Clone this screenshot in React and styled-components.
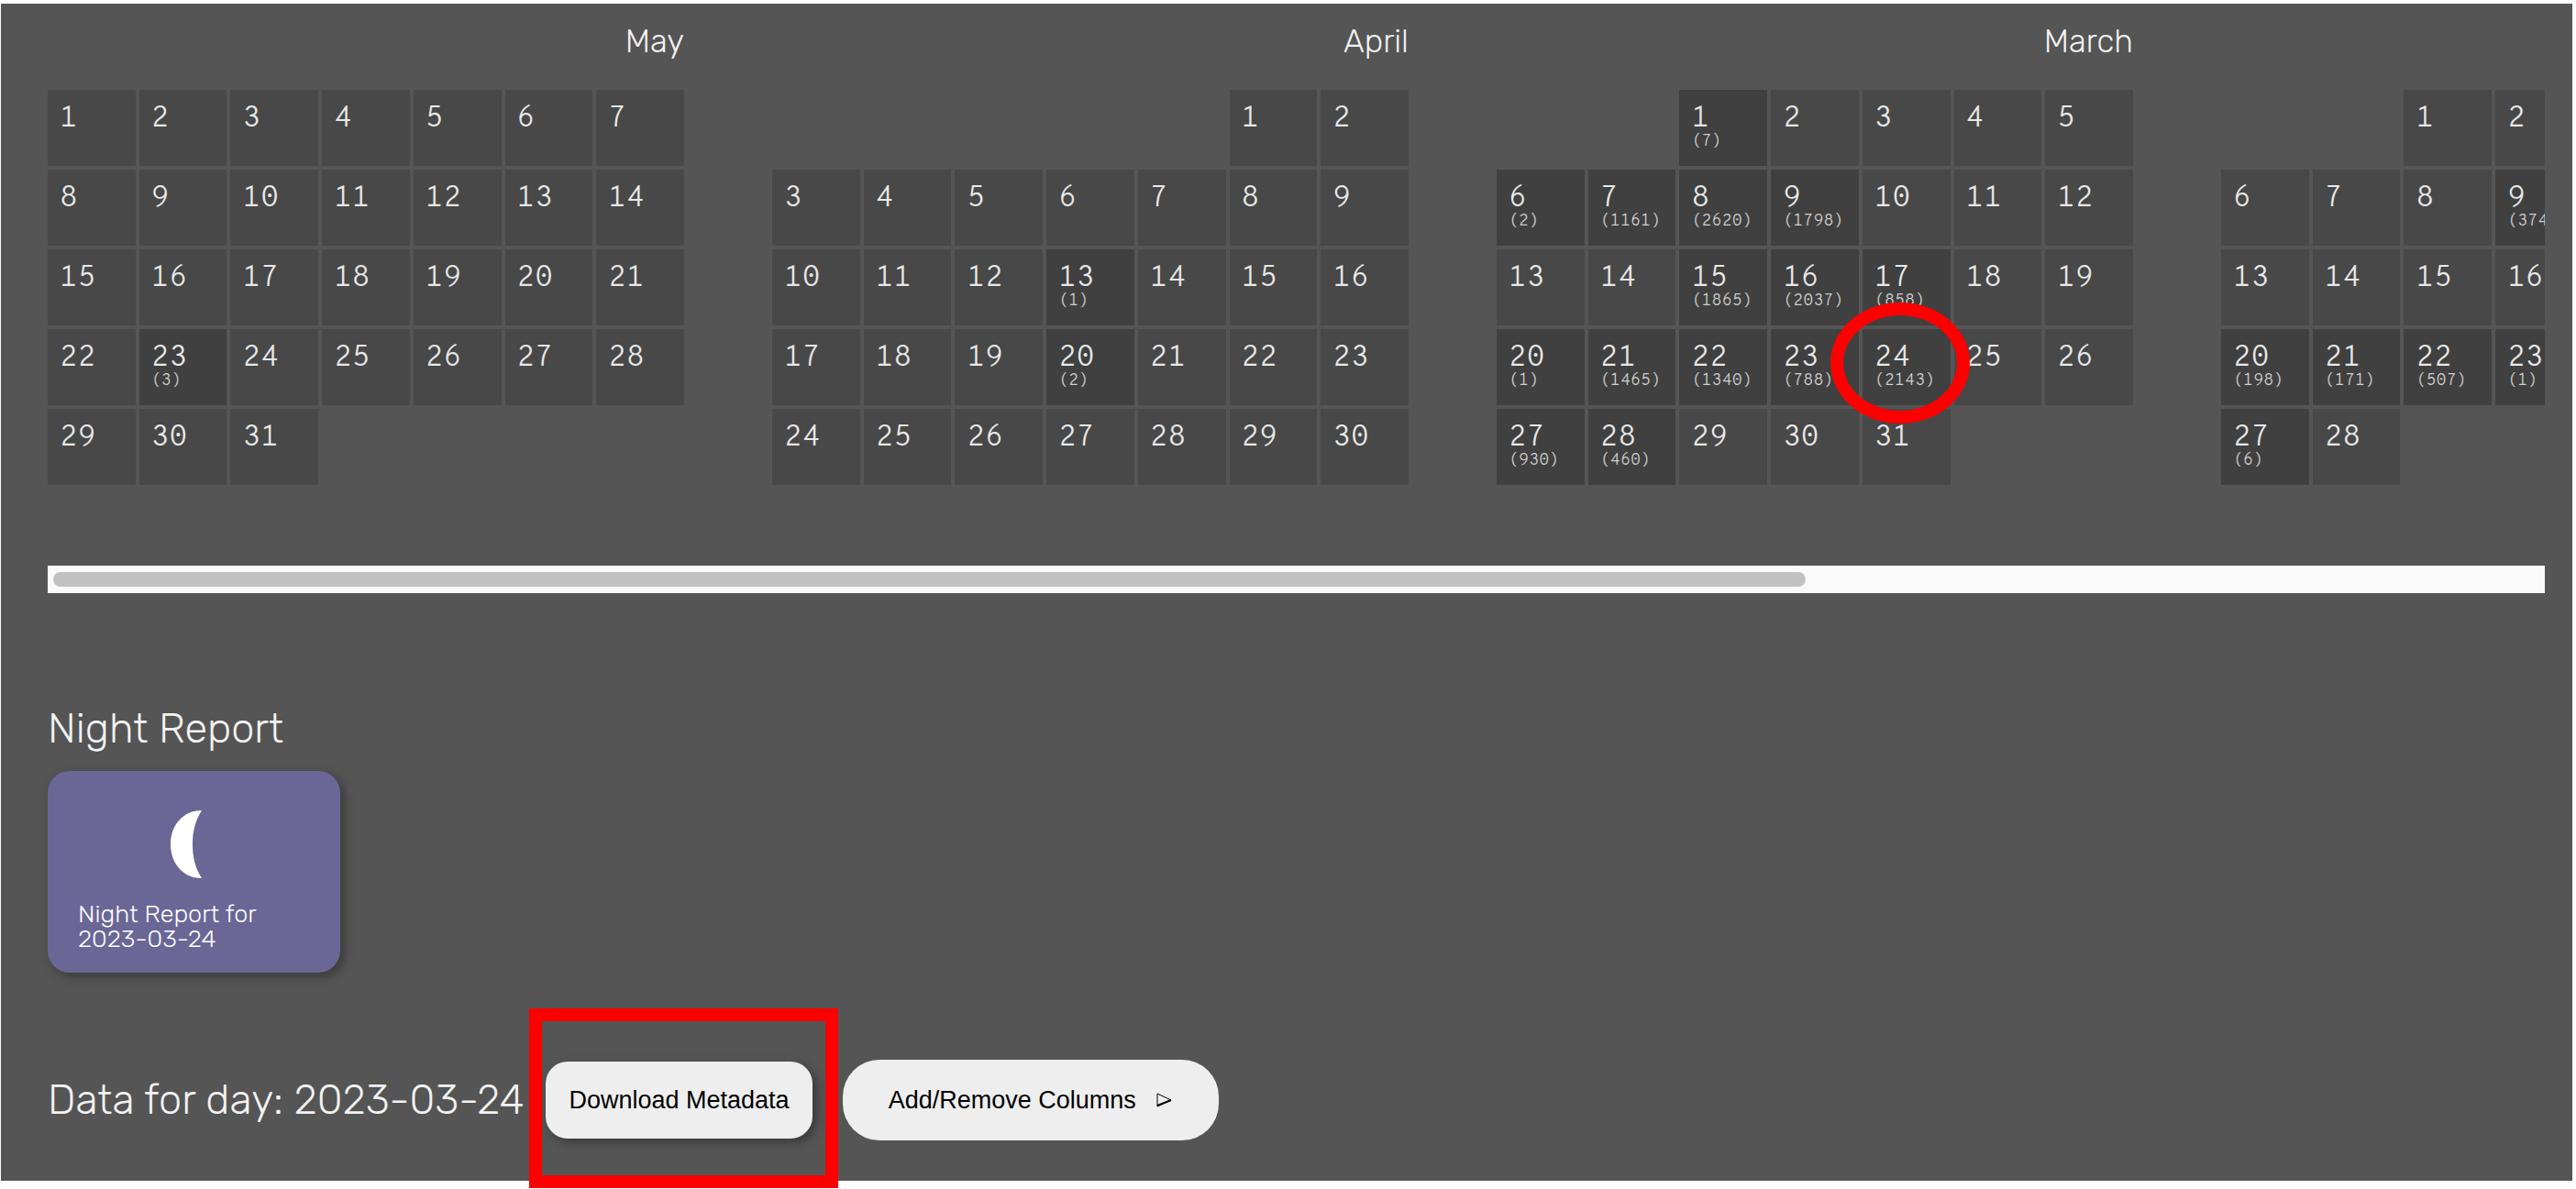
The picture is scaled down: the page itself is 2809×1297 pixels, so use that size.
import React from "react";
import styled, { createGlobalStyle, css } from "styled-components";

const sans = `Rubik, Inter, "Liberation Sans", sans-serif`;
const mono = `"Overpass Mono", "Liberation Mono", monospace`;

const GlobalStyle = createGlobalStyle`
  *, *::before, *::after { box-sizing: border-box; }
  body {
    margin: 0;
    background: #fff;
    font-family: ${sans};
    font-weight: 300;
    overflow-x: hidden;
  }
`;

const Page = styled.main`
  margin: 4px 4px 8px 1px;
  padding: 20px 30px 44px 51px;
  background: #555;
  color: #f2f2f2;
`;

const Months = styled.div`
  display: flex;
  gap: 96px;
  overflow: hidden;
`;

const MonthSection = styled.section`
  flex: none;
  width: 694px;
`;

const MonthName = styled.h3`
  margin: 0 0 34px;
  height: 40px;
  font-size: 35px;
  line-height: 42px;
  font-weight: 300;
  text-align: right;
`;

const Days = styled.div`
  display: grid;
  grid-template-columns: repeat(7, 1fr);
  grid-auto-rows: 83px;
  gap: 4px;
`;

const Day = styled.button`
  position: relative;
  display: flex;
  flex-direction: column;
  align-items: flex-start;
  min-width: 0;
  padding: 14px 0 0 13px;
  border: 0;
  background: ${(p) => (p.$hasData ? "#404040" : "#484848")};
  color: #e8e8e8;
  font-family: ${mono};
  font-weight: 300;
  font-size: 32px;
  line-height: 36px;
  text-align: left;
  ${(p) => p.$column && css`grid-column: ${p.$column};`}
`;

const Count = styled.small`
  color: #d0d0d0;
  font-size: 18px;
  line-height: 14px;
`;

const RedCircle = styled.span`
  position: absolute;
  z-index: 1;
  top: -29px;
  left: -35px;
  width: 152px;
  height: 132px;
  border: 14px solid #f00;
  border-radius: 50%;
  pointer-events: none;
`;

const Track = styled.div`
  margin-top: 88px;
  height: 30px;
  padding: 7px 6px;
  background: #fafafa;
`;

const Thumb = styled.div`
  width: ${(p) => p.$share}%;
  height: 16px;
  border-radius: 8px;
  background: #c1c1c1;
`;

const Heading = styled.h2`
  margin: 0;
  font-size: 45px;
  line-height: 52px;
  font-weight: 300;
  white-space: nowrap;
`;

const Report = styled.section`
  display: flex;
  flex-direction: column;
  align-items: flex-start;
  gap: 20px;
  padding-top: 122px;
`;

const ReportCard = styled.a`
  display: flex;
  flex-direction: column;
  width: 319px;
  height: 220px;
  padding: 42px 33px 0;
  border-radius: 24px;
  background: #6a6797;
  box-shadow: 4px 4px 12px rgba(0, 0, 0, 0.35);
  color: #fff;
  font-size: 27px;
  line-height: 27px;
  text-decoration: none;
`;

const Moon = styled.svg`
  align-self: center;
  width: 76px;
  height: 76px;
  margin-bottom: 25px;
`;

const DataBar = styled.section`
  display: flex;
  align-items: center;
  gap: 24px;
  margin-top: 95px;
`;

const ButtonGroup = styled.div`
  display: flex;
  align-items: center;
  gap: 33px;
`;

const Marked = styled.div`
  position: relative;
`;

const RedBox = styled.span`
  position: absolute;
  inset: -58px -28px -54px -18px;
  border: 14px solid #f00;
  pointer-events: none;
`;

const PillButton = styled.button`
  display: flex;
  align-items: center;
  gap: 22px;
  height: ${(p) => (p.$wide ? 88 : 84)}px;
  padding: 0 ${(p) => (p.$wide ? 50 : 25)}px;
  border: 0;
  border-radius: ${(p) => (p.$wide ? 40 : 24)}px;
  background: #eee;
  color: #000;
  box-shadow: ${(p) => (p.$wide ? "none" : "4px 4px 12px rgba(0, 0, 0, 0.35)")};
  font-family: "Liberation Sans", Arial, sans-serif;
  font-size: 27px;
  white-space: nowrap;
`;

const Arrow = styled.svg`
  width: 18px;
  height: 16px;
`;

const months = [
  { name: "May", start: 1, days: 31, counts: { 23: 3 } },
  { name: "April", start: 6, days: 30, counts: { 13: 1, 20: 2 } },
  {
    name: "March",
    start: 3,
    days: 31,
    marked: 24,
    counts: {
      1: 7, 6: 2, 7: 1161, 8: 2620, 9: 1798, 15: 1865, 16: 2037, 17: 858,
      20: 1, 21: 1465, 22: 1340, 23: 788, 24: 2143, 27: 930, 28: 460,
    },
  },
  {
    start: 3,
    days: 28,
    columns: 4,
    counts: { 9: 374, 20: 198, 21: 171, 22: 507, 23: 1, 27: 6 },
  },
];

function Month({ name, start, days, counts, marked, columns = 7 }) {
  const cells = Array.from({ length: days }, (_, i) => ({
    day: i + 1,
    column: ((start - 1 + i) % 7) + 1,
  })).filter((c) => c.column <= columns);
  return (
    <MonthSection>
      <MonthName>{name}</MonthName>
      <Days>
        {cells.map(({ day, column }) => (
          <Day key={day} type="button" $column={column} $hasData={day in counts}>
            {day}
            {day in counts && <Count>({counts[day]})</Count>}
            {marked === day && <RedCircle />}
          </Day>
        ))}
      </Days>
    </MonthSection>
  );
}

export default function App() {
  return (
    <>
      <GlobalStyle />
      <Page>
        <Months>
          {months.map((m, i) => (
            <Month key={i} {...m} />
          ))}
        </Months>
        <Track>
          <Thumb $share={70.5} />
        </Track>
        <Report>
          <Heading>Night Report</Heading>
          <ReportCard href="#night-report">
            <Moon viewBox="-5 0 76 76" aria-hidden="true">
              <path d="M41 1C21 1 7 17 7 38s14 37 34 37C34 64 31 52 31 38S34 12 41 1Z" fill="#fff" />
            </Moon>
            <span>
              Night Report for
              <br />
              2023-03-24
            </span>
          </ReportCard>
        </Report>
        <DataBar>
          <Heading>Data for day: 2023-03-24</Heading>
          <ButtonGroup>
            <Marked>
              <PillButton type="button">Download Metadata</PillButton>
              <RedBox />
            </Marked>
            <PillButton type="button" $wide>
              Add/Remove Columns
              <Arrow viewBox="0 0 18 16" aria-hidden="true">
                <path d="M1 1 16 8 1 15Z" fill="none" stroke="#000" strokeWidth="1" />
                <path d="M1 14 16 8" fill="none" stroke="#000" strokeWidth="2" />
              </Arrow>
            </PillButton>
          </ButtonGroup>
        </DataBar>
      </Page>
    </>
  );
}
